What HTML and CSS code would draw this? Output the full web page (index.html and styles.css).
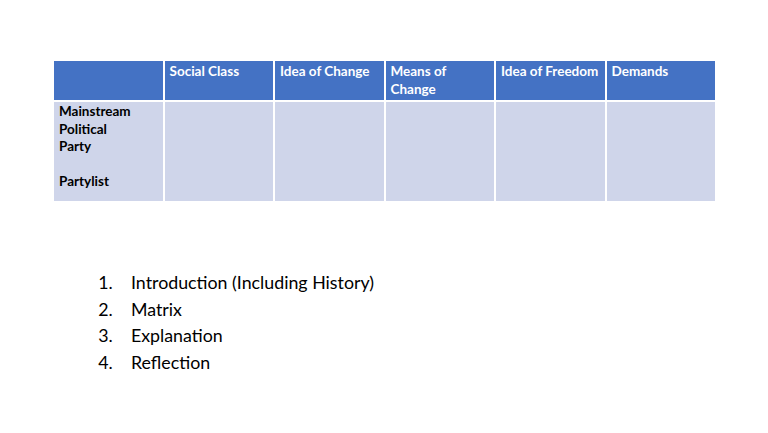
FILE: index.html
```html
<!DOCTYPE html>
<html>
<head>
<meta charset="utf-8">
<link rel="stylesheet" href="styles.css">
</head>
<body>
<div class="slide">
  <table class="matrix">
    <thead>
      <tr>
        <th></th>
        <th>Social Class</th>
        <th>Idea of Change</th>
        <th>Means of<br>Change</th>
        <th>Idea of Freedom</th>
        <th>Demands</th>
      </tr>
    </thead>
    <tbody>
      <tr>
        <td class="label">Mainstream<br>Political<br>Party<br><br>Partylist</td>
        <td></td>
        <td></td>
        <td></td>
        <td></td>
        <td></td>
      </tr>
    </tbody>
  </table>
  <ol class="outline">
    <li>Introduction (Including History)</li>
    <li>Matrix</li>
    <li>Explanation</li>
    <li>Reflection</li>
  </ol>
</div>
</body>
</html>
```

FILE: styles.css
```css
html, body {
  margin: 0;
  padding: 0;
  background: #ffffff;
}
.slide {
  width: 768px;
  height: 433px;
  padding-top: 59px;
  box-sizing: border-box;
  font-family: Lato, "Liberation Sans", Arial, sans-serif;
}
.matrix {
  margin-left: 52px;
  border-collapse: collapse;
  table-layout: fixed;
  width: 665px;
}
.matrix th, .matrix td {
  border: 2px solid #ffffff;
  padding: 2px 5px 2px;
  vertical-align: top;
  text-align: left;
  font-size: 13.5px;
  font-weight: bold;
  line-height: 17.5px;
}
.matrix th {
  background: #4472c4;
  color: #ffffff;
  height: 32px;
}
.matrix td {
  background: #cfd5ea;
  color: #000000;
  height: 96px;
  padding-top: 1px;
}
.outline {
  margin: 66px 0 0 0;
  padding-left: 131px;
  font-size: 17.8px;
  line-height: 26.5px;
  color: #000000;
}
.outline li::marker {
  content: counter(list-item) ".    ";
  white-space: pre;
}
```
